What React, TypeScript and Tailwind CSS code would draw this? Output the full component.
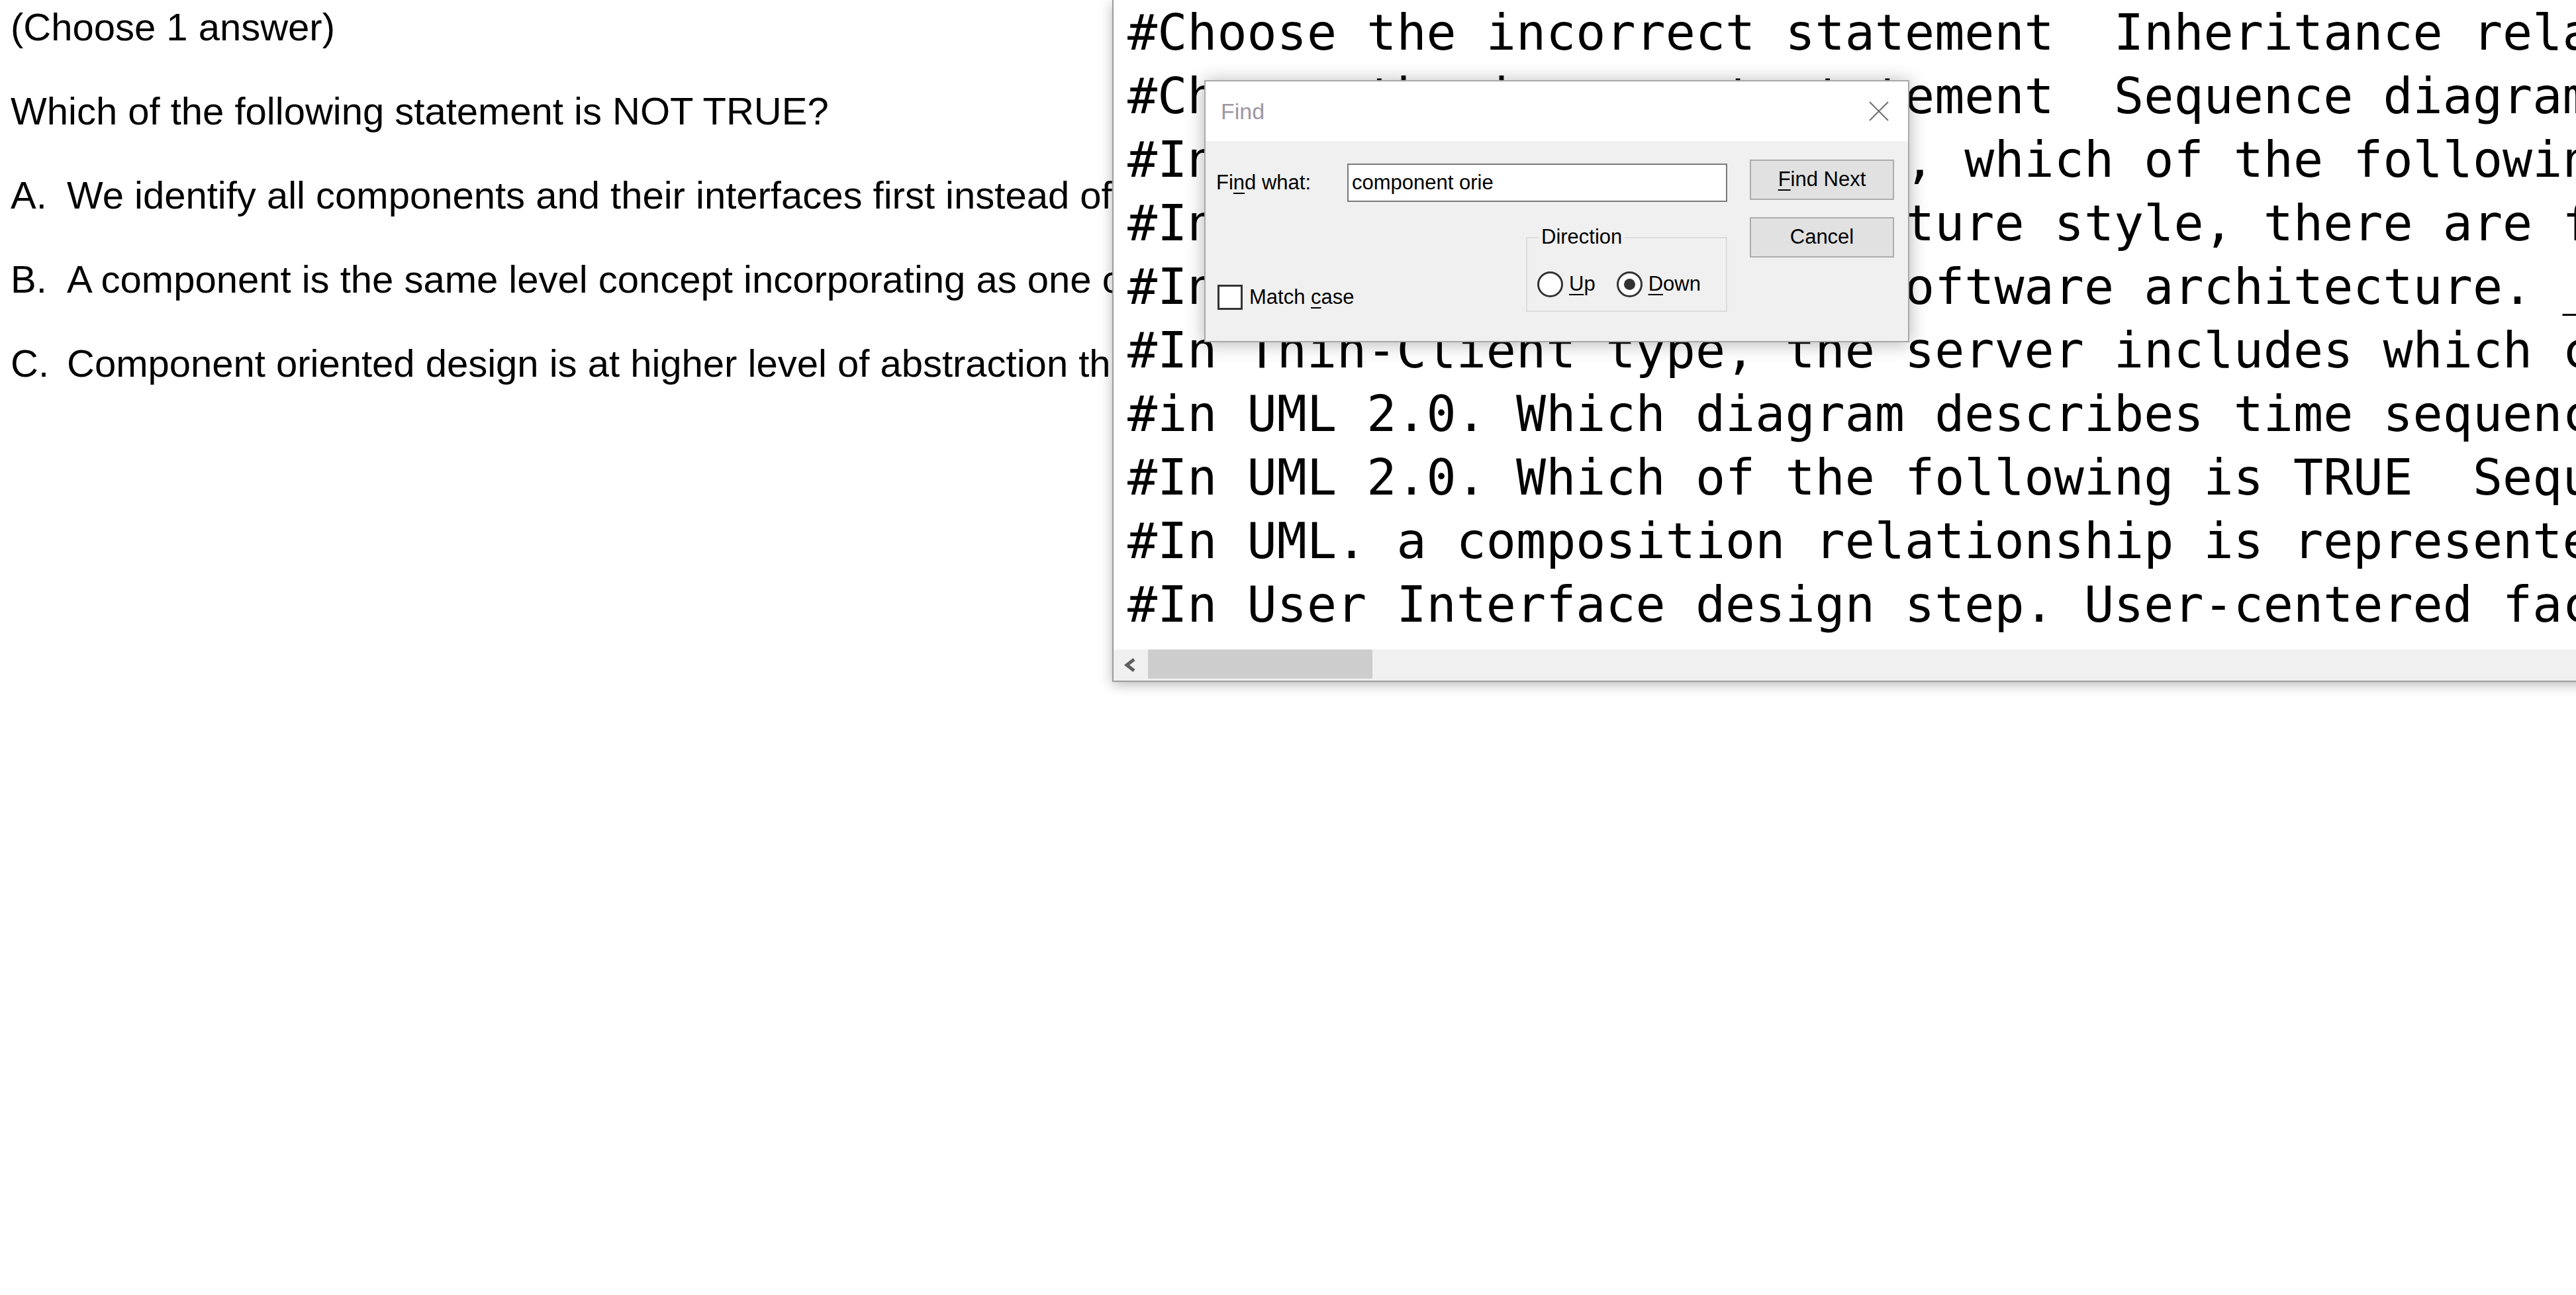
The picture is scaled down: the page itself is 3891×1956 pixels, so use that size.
import React from "react"

const sans = "font-['Liberation_Sans',Arial,sans-serif]"

const questionLines = [
  { label: "A.", text: "We identify all components and their interfaces first instead of identifying classes and their relationships" },
  { label: "B.", text: "A component is the same level concept incorporating as one class in object oriented design" },
  { label: "C.", text: "Component oriented design is at higher level of abstraction than object oriented design" },
]

const noteLines = [
  "#Choose the incorrect statement  Inheritance relationship is",
  "#Choose the incorrect statement  Sequence diagram describes",
  "#In component-based design, which of the following statements",
  "#In Client-Server architecture style, there are four layers",
  "#In the layered style of software architecture. _______",
  "#In Thin-Client type, the server includes which components",
  "#in UML 2.0. Which diagram describes time sequence of messages",
  "#In UML 2.0. Which of the following is TRUE  Sequence diagram",
  "#In UML. a composition relationship is represented by",
  "#In User Interface design step. User-centered factors",
]

function Key({ children }: { children: React.ReactNode }) {
  return <span className="underline decoration-[2px] underline-offset-[5px]">{children}</span>
}

function Radio({ checked }: { checked?: boolean }) {
  return (
    <span className="flex size-[39px] shrink-0 items-center justify-center rounded-full border-[3px] border-[#333] bg-white">
      {checked ? <span className="size-[17px] rounded-full bg-[#333]" /> : null}
    </span>
  )
}

function DialogButton({ children }: { children: React.ReactNode }) {
  return (
    <div className="flex h-[61px] w-[218px] items-center justify-center border-2 border-[#adadad] bg-[#e1e1e1]">
      {children}
    </div>
  )
}

function FindDialog() {
  return (
    <div
      className={`absolute left-[1819px] top-[121px] flex h-[396px] w-[1065px] flex-col border-2 border-[#a9a9a9] bg-[#f0f0f0] text-[31px] text-black shadow-[0_2px_26px_rgba(0,0,0,0.3)] ${sans}`}
    >
      <div className="flex h-[90px] items-center justify-between bg-white pl-[23px] pr-[29px]">
        <span className="text-[34px] text-[#9d97a3]">Find</span>
        <svg width="30" height="30" viewBox="0 0 30 30">
          <path d="M1 1L29 29M29 1L1 29" stroke="#707070" strokeWidth="2" fill="none" />
        </svg>
      </div>

      <div className="flex flex-1 pl-[16px] pr-[21px]">
        <div className="flex flex-1 flex-col pt-[34px]">
          <div className="flex items-center">
            <span className="w-[198px]">
              Fi<Key>n</Key>d what:
            </span>
            <div className="flex h-[58px] w-[574px] items-center border-2 border-[#7a7a7a] bg-white pl-[5px]">
              component orie
            </div>
          </div>

          <div className="mt-[53px] flex">
            <div className="mt-[68px] flex items-center self-start pl-[2px]">
              <span className="size-[38px] border-[3px] border-[#333] bg-white" />
              <span className="ml-[10px]">
                Match <Key>c</Key>ase
              </span>
            </div>
            <div className="relative ml-auto h-[113px] w-[304px] border-2 border-[#dcdcdc] pl-[15px] pt-[46px]">
              <span className="absolute left-[17px] top-[-20px] bg-[#f0f0f0] px-[4px] leading-[36px]">Direction</span>
              <div className="flex items-center">
                <Radio />
                <span className="ml-[9px]">
                  <Key>U</Key>p
                </span>
                <span className="ml-[32px]">
                  <Radio checked />
                </span>
                <span className="ml-[9px]">
                  <Key>D</Key>own
                </span>
              </div>
            </div>
          </div>
        </div>

        <div className="ml-[34px] flex flex-col gap-[26px] pt-[28px]">
          <DialogButton>
            <Key>F</Key>ind Next
          </DialogButton>
          <DialogButton>Cancel</DialogButton>
        </div>
      </div>
    </div>
  )
}

function NotepadWindow() {
  return (
    <div className="absolute left-[1680px] right-[-40px] top-0 flex h-[1030px] flex-col border-b-2 border-l-2 border-[#9c9c9c] bg-white shadow-[0_4px_18px_rgba(0,0,0,0.28)]">
      <div className="flex-1 overflow-hidden pl-[21px] pt-[1px] font-['DejaVu_Sans_Mono',monospace] text-[75px] leading-[96px] text-black">
        {noteLines.map((l, i) => (
          <div key={i} className="whitespace-pre">
            {l}
          </div>
        ))}
      </div>
      <div className="flex h-[47px] shrink-0 bg-[#f0f0f0]">
        <div className="flex w-[52px] items-center pl-[15px]">
          <svg width="20" height="21" viewBox="0 0 20 21">
            <path d="M16 2L5 10.5L16 19" stroke="#5f5f5f" strokeWidth="5" fill="none" />
          </svg>
        </div>
        <div className="h-[44px] w-[339px] bg-[#cdcdcd]" />
      </div>
    </div>
  )
}

export default function App() {
  return (
    <div className="relative h-[1956px] w-[3891px] overflow-hidden bg-white">
      <div className={`flex flex-col gap-[61px] pl-[16px] pt-[8px] text-[58px] leading-[66px] text-black ${sans}`}>
        <p className="whitespace-nowrap">(Choose 1 answer)</p>
        <p className="whitespace-nowrap">Which of the following statement is NOT TRUE?</p>
        {questionLines.map((q) => (
          <p key={q.label} className="flex whitespace-nowrap">
            <span className="w-[85px] shrink-0">{q.label}</span>
            <span>{q.text}</span>
          </p>
        ))}
      </div>

      <NotepadWindow />
      <FindDialog />
    </div>
  )
}
